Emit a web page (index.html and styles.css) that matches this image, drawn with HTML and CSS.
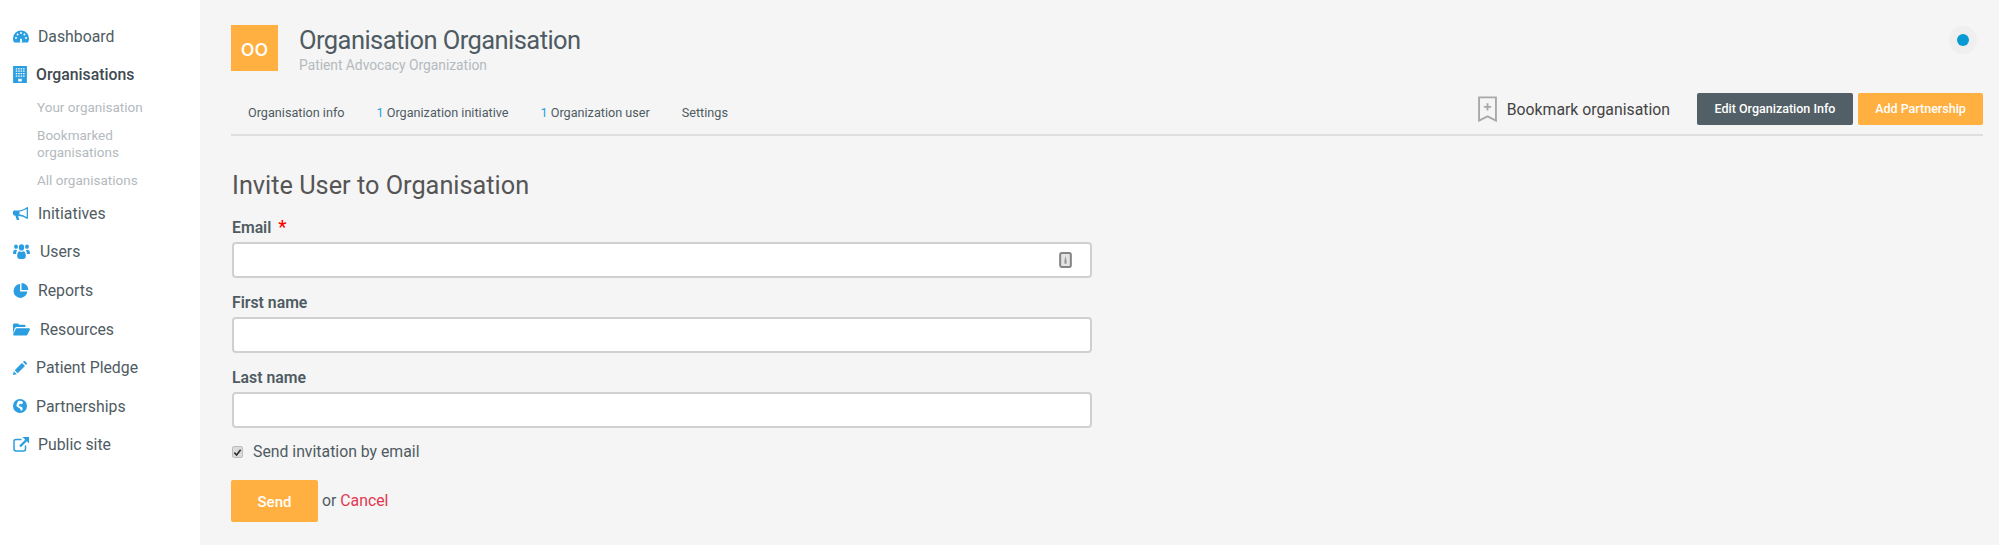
FILE: index.html
```html
<!DOCTYPE html>
<html lang="en">
<head>
<meta charset="utf-8">
<title>Invite User to Organisation</title>
<link rel="stylesheet" href="styles.css">
</head>
<body>
<div class="app">
  <aside class="sidebar">
    <nav class="nav">
      <a class="nav-item item-dashboard"><svg class="ico" viewBox="0 0 16 13"><path d="M8 .5A7.900 7.900 0 0 0 0 8.400c0 1.600.5 3 1.200 4.100h13.600c.7-1.100 1.200-2.500 1.200-4.100A7.900 7.900 0 0 0 8 .5z"/><g fill="#fff"><circle cx="3" cy="8" r="1"/><circle cx="4.600" cy="4.400" r="1"/><circle cx="8" cy="3" r="1"/><circle cx="11.400" cy="4.400" r="1"/><circle cx="13" cy="8" r="1"/><path d="M7 12.500 7.200 8.800h1.600L9 12.500z"/></g></svg><span>Dashboard</span></a>
      <a class="nav-item active item-org"><svg class="ico ico-org" viewBox="0 0 13 16"><path d="M0 0h13v16H0z"/><path fill="#fff" d="M2.500 2h1.400v1.200H2.500zM4.800 2h1.400v1.200H4.800zM7.100 2h1.400v1.200H7.100zM9.400 2h1.400v1.200H9.400zM2.500 4.300h1.400v1.200H2.500zM4.800 4.300h1.400v1.200H4.800zM7.100 4.300h1.400v1.200H7.100zM9.400 4.300h1.400v1.200H9.400zM2.500 6.600h1.400v1.200H2.500zM4.800 6.600h1.400v1.200H4.800zM7.100 6.600h1.400v1.200H7.100zM9.400 6.600h1.400v1.200H9.400zM2.500 8.900h1.400v1.200H2.500zM4.800 8.900h1.400v1.200H4.800zM7.100 8.900h1.400v1.200H7.100zM9.400 8.900h1.400v1.200H9.400zM4.800 12h3.400v2.500H4.800z"/></svg><span>Organisations</span></a>
      <div class="subnav">
        <a>Your organisation</a>
        <a>Bookmarked organisations</a>
        <a>All organisations</a>
      </div>
      <a class="nav-item item-init"><svg class="ico" viewBox="0 0 16 13"><path d="M15 0 13.800.2C11.500 2 8.500 3.300 5.500 3.400H1.500C.7 3.400 0 4 0 4.900v2.200c0 .8.700 1.500 1.500 1.500h.8L3.800 13h2.400L5.200 8.700c3 .3 6.300 1.500 8.600 3.100h1.200zM13.700 2v8c-2-1.200-4.700-2.300-7.200-2.500V4.500c2.500-.2 5.200-1.300 7.200-2.500z"/></svg><span>Initiatives</span></a>
      <a class="nav-item item-users"><svg class="ico ico-wide" viewBox="0 0 17 13" preserveAspectRatio="none"><circle cx="3" cy="2.300" r="1.900"/><circle cx="14" cy="2.300" r="1.900"/><circle cx="8.500" cy="3" r="2.700"/><path d="M0 8.300C0 5.900 1 5 2.600 5c.5 0 1 .2 1.500.4-.7.800-1 1.900-1 3.300H.8C.3 8.700 0 8.600 0 8.300zM17 8.300c0-2.400-1-3.300-2.600-3.300-.5 0-1 .2-1.500.4.700.8 1 1.900 1 3.300h2.300c.5 0 .8-.1.800-.4zM4.200 10.200c0-2.700 1.100-4 2.500-4 .5.400 1.100.7 1.800.7s1.300-.3 1.800-.7c1.400 0 2.500 1.300 2.500 4 0 1.900-1 2.800-2.500 2.800H6.700c-1.500 0-2.500-.9-2.500-2.800z"/></svg><span>Users</span></a>
      <a class="nav-item item-reports"><svg class="ico" viewBox="0 0 15 15"><path d="M6.600 1.100a6.900 6.900 0 1 0 7.200 7.300H6.600z"/><path d="M8 0v6.900h6.900A6.900 6.900 0 0 0 8 0z"/></svg><span>Reports</span></a>
      <a class="nav-item item-res"><svg class="ico ico-wide" viewBox="0 0 17 12"><path d="M0 10V1.300C0 .6.500 0 1.200 0h3.500c.7 0 1.300.6 1.300 1.300h5.200c.7 0 1.200.5 1.200 1.200v1H4c-1 0-1.800.5-2.300 1.300z"/><path d="M4 4.700h11.800c.9 0 1.400.9 1 1.600L14.500 11c-.3.600-.9 1-1.500 1H1.300C.4 12-.100 11.100.300 10.400l2.300-4.700c.3-.6.800-1 1.400-1z"/></svg><span>Resources</span></a>
      <a class="nav-item item-pledge"><svg class="ico ico-small" viewBox="0 0 14 14"><path d="M0 14l.8-3.800 3 3zM1.700 9.300 9 2l3 3-7.300 7.300zM10 1l.7-.7c.4-.4 1-.4 1.400 0l1.600 1.600c.4.400.4 1 0 1.400l-.7.700z"/></svg><span>Patient Pledge</span></a>
      <a class="nav-item item-part"><svg class="ico ico-small" viewBox="0 0 14 14"><circle cx="7" cy="7" r="7"/><path fill="#fff" d="M5 2.300c1.200-.6 3-.6 4.400.2l.7 1.500-1.500 1.200-1.800-.4-1 1.400L7 7.600l2.200.5.600 2.200-1.700 1.700-1.100-2.400-1.800-1-1.800-1.700.4-2.200z"/></svg><span>Partnerships</span></a>
      <a class="nav-item item-public"><svg class="ico" viewBox="0 0 16 15"><path d="M12.500 8.500v3.600c0 1-.8 1.900-1.900 1.900H2.900C1.800 14 1 13.100 1 12.100V4.400c0-1 .8-1.900 1.900-1.900h5.600" fill="none" stroke="#2a9ee0" stroke-width="1.500"/><path d="M9.500 0H16v6.500l-2.200-2.200-6 6-1.600-1.600 6-6z"/></svg><span>Public site</span></a>
    </nav>
  </aside>

  <main class="main">
    <header class="org-head">
      <div class="org-logo">oo</div>
      <div class="org-titles">
        <h1>Organisation Organisation</h1>
        <p>Patient Advocacy Organization</p>
      </div>
      <div class="status"><span class="status-dot"></span></div>
    </header>

    <div class="toolbar">
      <ul class="tabs">
        <li>Organisation info</li>
        <li><b>1</b> Organization initiative</li>
        <li><b>1</b> Organization user</li>
        <li>Settings</li>
      </ul>
      <div class="actions">
        <a class="bookmark"><svg class="bookmark-ico" viewBox="0 0 18 24"><path d="M1 1h16v22l-8-4-8 4z" fill="none" stroke="#a9a9a9" stroke-width="1.800"/><path d="M9 6.500v7M5.500 10h7" fill="none" stroke="#a9a9a9" stroke-width="1.800"/></svg><span>Bookmark organisation</span></a>
        <a class="btn btn-dark">Edit Organization Info</a>
        <a class="btn btn-orange">Add Partnership</a>
      </div>
    </div>

    <form class="form">
      <h2>Invite User to Organisation</h2>
      <div class="field">
        <label>Email <em>*</em></label>
        <div class="input has-ico"><svg class="key-ico" viewBox="0 0 12 15"><rect x="1" y="1" width="10" height="13" rx="1.500" fill="#e4e4e4" stroke="#858585" stroke-width="1.900"/><path d="M6 3.500 7 8v3H5V8z" fill="#999"/></svg></div>
      </div>
      <div class="field">
        <label>First name</label>
        <div class="input"></div>
      </div>
      <div class="field">
        <label>Last name</label>
        <div class="input"></div>
      </div>
      <div class="check-row">
        <span class="checkbox"><svg viewBox="0 0 10 10"><path d="M1.500 5.200 4 7.800 8.500 2" fill="none" stroke="#333" stroke-width="1.900"/></svg></span>
        <span>Send invitation by email</span>
      </div>
      <div class="form-actions">
        <a class="btn-send">Send</a>
        <span class="or">or <a class="cancel">Cancel</a></span>
      </div>
    </form>
  </main>
</div>
</body>
</html>
```
FILE: styles.css
```css
* { box-sizing: border-box; }
html, body { margin: 0; height: 100%; overflow: hidden; }
body { font-family: Roboto, "Liberation Sans", sans-serif; color: #4f5b62; background: #f5f5f5; }
.app { display: flex; height: 545px; }

.sidebar { width: 200px; flex: none; background: #fff; padding-top: 17px; }
.nav { display: flex; flex-direction: column; }
.nav-item { display: flex; align-items: center; height: 38.600px; padding-left: 13px; font-size: 15.800px; color: #4f5b62; gap: 9px; }
.ico { width: 16px; height: 15px; fill: #2a9ee0; flex: none; }
.ico-org { width: 14px; height: 17px; }
.ico-wide { width: 17px; }
.ico-small { width: 14px; height: 14px; }
.item-dashboard { height: 38px; }
.item-org { height: 38px; font-weight: 500; color: #3f4a50; }
.item-users, .item-res { gap: 10px; }
.subnav { display: flex; flex-direction: column; gap: 11px; padding: 6px 20px 5px 37px; font-size: 13.500px; line-height: 17px; color: #b4babe; }

.main { flex: 1; min-width: 0; padding: 0 16px 0 31px; }
.org-head { display: flex; align-items: flex-start; height: 93px; padding-top: 25px; }
.org-logo { width: 47px; height: 46px; flex: none; background: #ffb040; color: #fff; font-size: 24px; line-height: 1; display: flex; align-items: center; justify-content: center; }
.org-titles { margin-left: 21px; }
.org-titles h1 { margin: 0; font-size: 25.500px; letter-spacing: -.56px; line-height: 30px; font-weight: 400; color: #4f5b62; }
.org-titles p { margin: 2px 0 0; font-size: 13.800px; line-height: 16px; color: #b4babe; }
.status { margin-left: auto; margin-right: 6px; margin-top: 1px; width: 28px; height: 28px; border-radius: 50%; background: #efefef; display: flex; align-items: center; justify-content: center; }
.status-dot { width: 12px; height: 12px; border-radius: 50%; background: #0a9ad3; }

.toolbar { display: flex; justify-content: space-between; align-items: flex-start; height: 43px; border-bottom: 2px solid #dfdfdf; }
.tabs { list-style: none; margin: 0; padding: 12px 0 0 17px; display: flex; gap: 32px; font-size: 12.650px; line-height: 16px; color: #4f5b62; }
.tabs b { font-weight: 400; color: #2a9ee0; }
.actions { display: flex; align-items: center; }
.bookmark { display: flex; align-items: center; gap: 10px; margin-right: 27px; font-size: 15.800px; color: #444; }
.bookmark-ico { width: 19px; height: 26px; }
.btn { display: flex; align-items: center; justify-content: center; height: 32px; border-radius: 2px; font-size: 12.500px; font-weight: 500; color: #fff; padding-bottom: 2px; }
.btn-dark { width: 156px; background: #535f66; margin-right: 5px; }
.btn-orange { width: 125px; background: #ffb040; }

.form { padding-top: 35px; width: 861px; padding-left: 1px; }
.form h2 { margin: 0; font-size: 25.300px; line-height: 30px; font-weight: 400; color: #555; }
.field label { display: block; font-size: 15.800px; line-height: 20px; font-weight: 600; color: #4f5b62; padding-top: 15px; height: 39px; }
.form h2 + .field label { padding-top: 17px; height: 41px; }
.field em { color: #f00; font-style: normal; font-size: 18px; line-height: 16px; margin-left: 3px; }
.input { height: 36px; background: #fff; border: 2px solid #d0d0d0; border-radius: 4px; display: flex; align-items: center; justify-content: flex-end; padding-right: 18px; }
.key-ico { width: 13px; height: 16px; }
.check-row { display: flex; align-items: center; gap: 10px; font-size: 15.800px; line-height: 20px; margin-top: 14px; }
.checkbox { width: 11px; height: 12px; background: #dcdcdc; border: 1px solid #bdbdbd; border-radius: 2px; display: flex; align-items: center; justify-content: center; }
.checkbox svg { width: 9px; height: 9px; }
.form-actions { display: flex; align-items: center; margin-top: 18px; margin-left: -1px; }
.btn-send { width: 87px; height: 42px; background: #ffb040; border-radius: 2px; color: #fff; font-size: 15px; font-weight: 500; display: flex; align-items: center; justify-content: center; padding-top: 2px; }
.or { margin-left: 4px; font-size: 15.800px; margin-top: -2px; }
.cancel { color: #e0394f; }
```
